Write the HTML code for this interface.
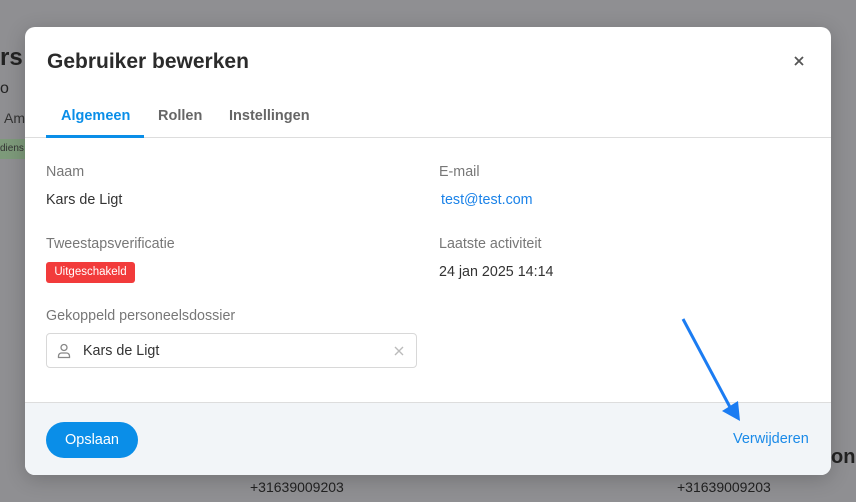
<!DOCTYPE html>
<html><head><meta charset="utf-8"><style>
*{box-sizing:border-box;margin:0;padding:0}
body{width:856px;height:502px;overflow:hidden;background:#8f8f92;font-family:"Liberation Sans",Arial,sans-serif;position:relative}
.bg{position:absolute;color:#222}
.modal{position:absolute;left:25px;top:27px;width:806px;height:448px;background:#fff;border-radius:10px;overflow:hidden;box-shadow:0 4px 20px rgba(0,0,0,.2)}
.title{position:absolute;left:22px;top:23px;font-size:21px;font-weight:bold;color:#2b2b2b}
.tabs{position:absolute;left:0;top:0;width:806px;height:111px;border-bottom:1px solid #ddd}
.tab{position:absolute;top:81px;font-size:14.5px;font-weight:bold;color:#666}
.ul{position:absolute;left:21px;top:108px;width:98px;height:3px;background:#0a8ee8}
.lbl{position:absolute;font-size:14.3px;color:#777}
.val{position:absolute;font-size:14.3px;color:#333}
.badge{position:absolute;left:21px;top:235px;width:89px;height:21px;background:#f23b3b;border-radius:3px;color:#fff;font-size:11.5px;line-height:21px;text-align:center}
.input{position:absolute;left:21px;top:306px;width:371px;height:35px;border:1px solid #d8d8d8;border-radius:4px}
.footer{position:absolute;left:0;top:375px;width:806px;height:73px;background:#f2f5f8;border-top:1px solid #ddd}
.btn{position:absolute;left:21px;top:19px;width:92px;height:36px;border-radius:18px;background:#0a8ee8;color:#fff;font-size:14.5px;line-height:36px;text-align:center}
</style></head><body>
<div class="bg" style="left:0;top:44px;font-size:24px;font-weight:bold">rs</div>
<div class="bg" style="left:0;top:80px;font-size:16px">o</div>
<div class="bg" style="left:4px;top:110px;font-size:14px;color:#333">Ams</div>
<div style="position:absolute;left:0;top:139px;width:26px;height:20px;background:#7d9a7a;font-size:10px;line-height:20px;color:#333">diens</div>
<div class="bg" style="left:831px;top:446px;font-size:20px;font-weight:bold">onl</div>
<div class="bg" style="left:250px;top:479px;font-size:14px;color:#222">+31639009203</div>
<div class="bg" style="left:677px;top:479px;font-size:14px;color:#222">+31639009203</div>
<div class="modal">
<div class="tabs"></div>
<div class="title">Gebruiker bewerken</div>
<svg style="position:absolute;left:769px;top:29px" width="10" height="10" viewBox="0 0 10 10" stroke="#555" stroke-width="1.8"><path d="M1 1L9 9M9 1L1 9"/></svg>
<div class="tab" style="left:36px;color:#0a8ee8">Algemeen</div>
<div class="tab" style="left:133px">Rollen</div>
<div class="tab" style="left:204px">Instellingen</div>
<div class="ul"></div>
<div class="lbl" style="left:21px;top:137px">Naam</div>
<div class="val" style="left:21px;top:165px">Kars de Ligt</div>
<div class="lbl" style="left:414px;top:137px">E-mail</div>
<div class="val" style="left:416px;top:165px;color:#1a82e8">test@test.com</div>
<div class="lbl" style="left:21px;top:209px">Tweestapsverificatie</div>
<div class="badge">Uitgeschakeld</div>
<div class="lbl" style="left:414px;top:209px">Laatste activiteit</div>
<div class="val" style="left:414px;top:237px">24 jan 2025 14:14</div>
<div class="lbl" style="left:21px;top:281px">Gekoppeld personeelsdossier</div>
<div class="input">
<svg style="position:absolute;left:10px;top:9px" width="14" height="16" viewBox="0 0 14 16" fill="none" stroke="#888" stroke-width="1.3"><circle cx="7" cy="4.5" r="3"/><path d="M1.5 14.5v-1.5a3 3 0 0 1 3-3h5a3 3 0 0 1 3 3v1.5z"/></svg>
<div style="position:absolute;left:36px;top:9px;font-size:14.3px;color:#333">Kars de Ligt</div>
<svg style="position:absolute;left:347px;top:12px" width="10" height="10" viewBox="0 0 10 10" stroke="#bbb" stroke-width="1.4"><path d="M1 1L9 9M9 1L1 9"/></svg>
</div>
<div class="footer">
<div class="btn">Opslaan</div>
<div style="position:absolute;left:708px;top:28px;font-size:14.5px;color:#1a8ae8">Verwijderen</div>
</div>
</div>
<svg style="position:absolute;left:0;top:0" width="856" height="502"><line x1="683" y1="319" x2="731" y2="409" stroke="#1b7cf2" stroke-width="3"/><polygon points="722,411 740,421 738,401" fill="#1b7cf2"/></svg>
</body></html>
